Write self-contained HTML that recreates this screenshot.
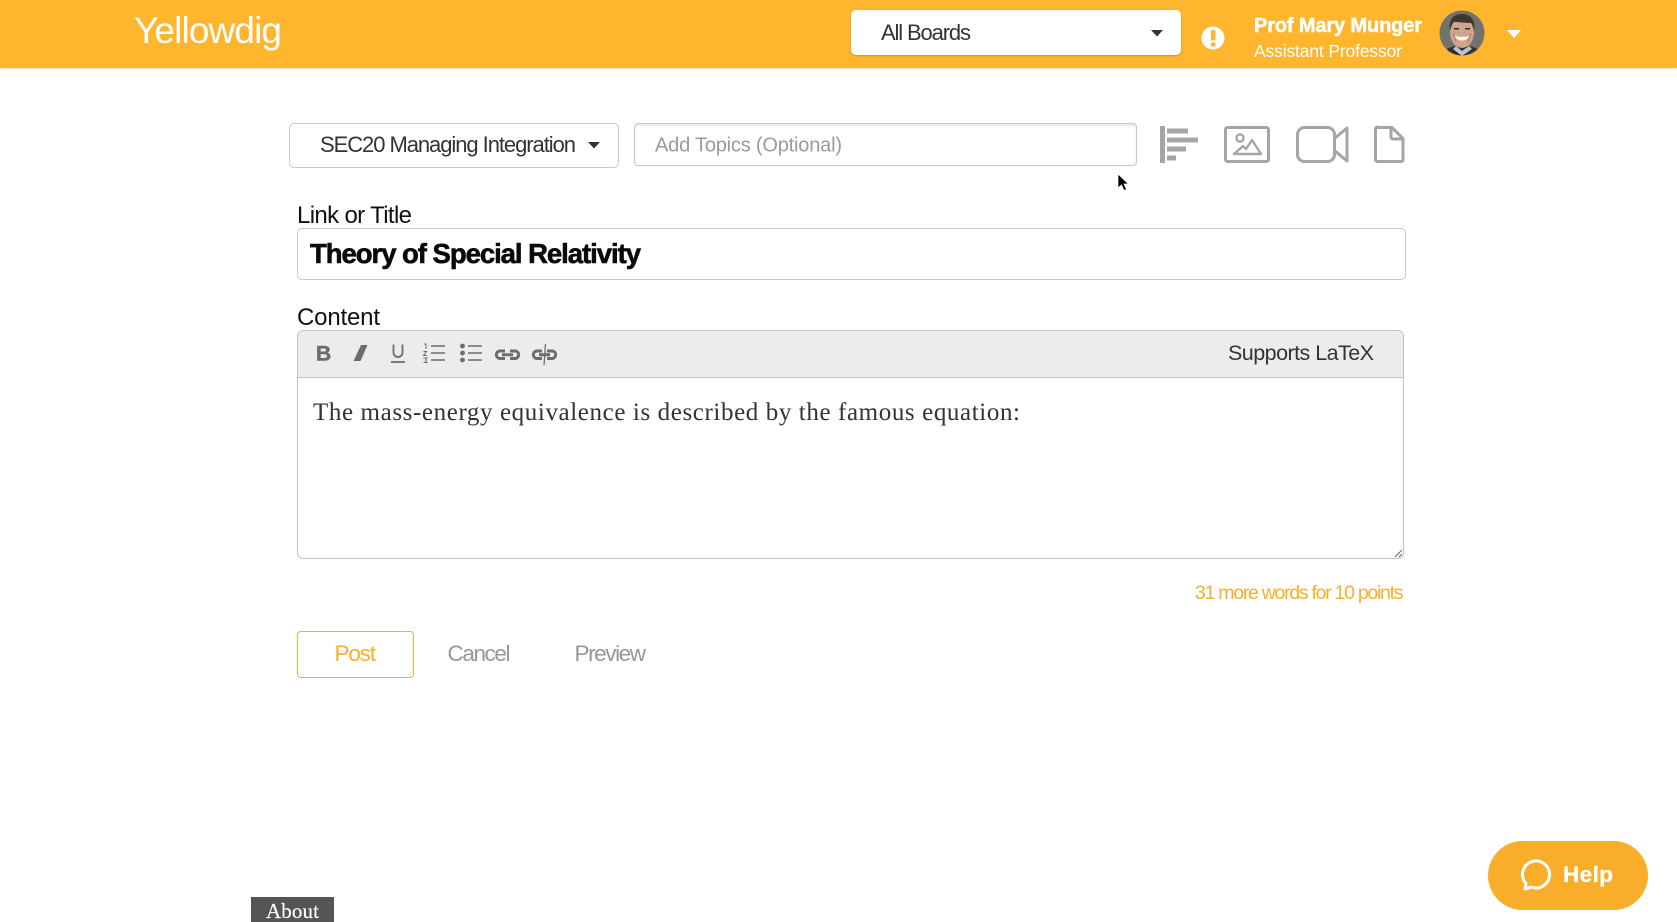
<!DOCTYPE html>
<html lang="en">
<head>
<meta charset="utf-8">
<title>Yellowdig</title>
<style>
html,body{margin:0;padding:0;background:#fff;width:1677px;height:922px;overflow:hidden}
.b{position:absolute;box-sizing:border-box}
svg.o{position:absolute;left:0;top:0}
text{font-family:"Liberation Sans",sans-serif}
.s{font-family:"Liberation Serif",serif}
</style>
</head>
<body>
<div class="b" style="left:0;top:0;width:1677px;height:68px;background:#ffb52e;box-shadow:0 1px 2px rgba(0,0,0,.15)"></div>
<div class="b" style="left:851px;top:10px;width:330px;height:45px;background:#fff;border-radius:5px;box-shadow:0 1px 2px rgba(0,0,0,.2)"></div>
<div class="b" style="left:289px;top:123px;width:330px;height:45px;border:1px solid #c8c8c8;border-radius:5px"></div>
<div class="b" style="left:634px;top:123px;width:503px;height:43px;border:1px solid #c8c8c8;border-radius:4px;box-shadow:inset 0 2px 2px rgba(0,0,0,.09)"></div>
<div class="b" style="left:297px;top:228px;width:1109px;height:52px;border:1px solid #c8c8c8;border-radius:5px"></div>
<div class="b" style="left:297px;top:330px;width:1107px;height:229px;border:1px solid #c4c4c4;border-radius:6px;overflow:hidden">
  <div style="height:46px;background:#ececec;border-bottom:1px solid #c4c4c4"></div>
</div>
<div class="b" style="left:297px;top:631px;width:117px;height:47px;border:1px solid #f9ae2b;border-radius:4px"></div>
<div class="b" style="left:251px;top:897px;width:83px;height:25px;background:#555"></div>
<div class="b" style="left:1488px;top:841px;width:160px;height:69px;background:#f9ae2b;border-radius:35px"></div>

<svg class="o" width="1677" height="922" viewBox="0 0 1677 922" xmlns="http://www.w3.org/2000/svg">
  <text x="134" y="43" font-size="37" fill="#fff" textLength="148" lengthAdjust="spacing">Yellowdig</text>
  <text x="881" y="40" font-size="22" fill="#333" textLength="90" lengthAdjust="spacing">All Boards</text>
  <path d="M1151 30h12l-6 6.500z" fill="#333"/>
  <circle cx="1213" cy="38" r="11.500" fill="#fff"/>
  <rect x="1211" y="30" width="4.500" height="10.500" rx="1" fill="#ffb52e"/>
  <rect x="1211" y="42.500" width="4.500" height="4" rx="1" fill="#ffb52e"/>
  <text x="1254" y="32" font-size="20" font-weight="700" fill="#fff" stroke="#fff" stroke-width=".5" textLength="168" lengthAdjust="spacing">Prof Mary Munger</text>
  <text x="1254" y="57" font-size="17.500" fill="#fff" textLength="148" lengthAdjust="spacing">Assistant Professor</text>

  <defs><clipPath id="av"><circle cx="1462" cy="33" r="22.500"/></clipPath></defs>
  <g clip-path="url(#av)">
    <rect x="1439" y="10" width="46" height="46" fill="#72726e"/>
    <path d="M1441 56c2-6 9-9 14-10h14c6 1 12 4 14 10z" fill="#2f3238"/>
    <path d="M1456 46l6 5 7-5 3 3-10 7-9-7z" fill="#b9c6cf"/>
    <ellipse cx="1462" cy="32" rx="12" ry="16" fill="#cfa68c"/>
    <path d="M1450 31c-2-12 4-17 12-17s14 5 12 17c-1-4-2-7-3-8-6 0-12-1-17-1-2 2-3 5-4 9z" fill="#43362e"/>
    <path d="M1454.500 36c3 6 12 6 15 0-4 1-11 1-15 0z" fill="#fbf8f4"/>
    <rect x="1454" y="28" width="5" height="1.500" fill="#3d2a22"/>
    <rect x="1465" y="28" width="5" height="1.500" fill="#3d2a22"/>
    <path d="M1453 33c1 4 3 7 3 9M1471 33c-1 4-3 7-3 9" stroke="#a87f68" fill="none"/>
  </g>
  <path d="M1507 30h14l-7 8z" fill="#fff"/>

  <text x="320" y="152" font-size="22" fill="#333" textLength="256" lengthAdjust="spacing">SEC20 Managing Integration</text>
  <path d="M588 142h12l-6 6.500z" fill="#333"/>
  <text x="655" y="151.500" font-size="20" fill="#9a9a9a" textLength="187" lengthAdjust="spacing">Add Topics (Optional)</text>

  <g fill="#a5a5a5">
    <rect x="1160" y="126" width="5" height="37"/>
    <rect x="1167" y="128.500" width="21" height="5"/>
    <rect x="1167" y="137.500" width="31" height="5"/>
    <rect x="1167" y="146.500" width="19" height="5"/>
    <rect x="1167" y="155.500" width="9" height="5"/>
  </g>
  <g fill="none" stroke="#a5a5a5" stroke-width="3" stroke-linejoin="round">
    <rect x="1225.500" y="127.500" width="43" height="34" rx="2"/>
    <circle cx="1240" cy="138" r="3.600" stroke-width="2.400"/>
    <path d="M1234 154l9-8 3 3 6-9 9 14z" stroke-width="2.400"/>
    <rect x="1297.500" y="127.500" width="37" height="34" rx="7"/>
    <path d="M1335 138l12-10v33l-12-10"/>
    <path d="M1377.500 127.500h14.500l11 11v21a2 2 0 0 1-2 2h-23.500a2 2 0 0 1-2-2v-30.500a2 2 0 0 1 2-2z"/>
    <path d="M1391 127.500v9.500a2 2 0 0 0 2 2h10"/>
  </g>

  <path d="M1118 174v14l3.500-3 2.500 5.500 2.500-1-2.500-5.500h4.500z" fill="#000" stroke="#fff" stroke-width=".7"/>

  <text x="297" y="223" font-size="24" fill="#111" textLength="115" lengthAdjust="spacing">Link or Title</text>
  <text x="310" y="263" font-size="27.500" font-weight="700" fill="#0a0a0a" stroke="#0a0a0a" stroke-width=".6" textLength="331" lengthAdjust="spacing">Theory of Special Relativity</text>
  <text x="297" y="325" font-size="24" fill="#111" textLength="83" lengthAdjust="spacing">Content</text>

  <text x="316" y="360.500" font-size="21" font-weight="700" fill="#6c6c6c" stroke="#6c6c6c" stroke-width=".5" textLength="15" lengthAdjust="spacing">B</text>
  <path d="M361 345h6.500l-7 16h-7z" fill="#6c6c6c"/>
  <path d="M393.500 344.500v8a4.500 4.500 0 0 0 9 0v-8M391 362h14" fill="none" stroke="#6c6c6c" stroke-width="1.800"/>
  <g fill="none" stroke="#6c6c6c" stroke-width="1.500">
    <path d="M431 346h14M431 353h14M431 360h14"/>
    <path d="M468 346h14M468 353h14M468 360h14"/>
    <path d="M424 344h2v5M423.500 351.500h3l-3 4h3.500M423.500 358h3.500l-1.500 2 1.500 2.500h-3.500" stroke-width="1"/>
  </g>
  <g fill="#6c6c6c"><circle cx="462.500" cy="346" r="2.400"/><circle cx="462.500" cy="353" r="2.400"/><circle cx="462.500" cy="360" r="2.400"/></g>
  <g fill="none" stroke="#6c6c6c" stroke-width="3">
    <path d="M505 351h-5.500a3.800 3.800 0 0 0 0 7.500h5.500M510 351h5.500a3.800 3.800 0 0 1 0 7.500h-5.500M502 354.700h11"/>
    <path d="M542 351h-5.500a3.800 3.800 0 0 0 0 7.500h5.500M547 351h5.500a3.800 3.800 0 0 1 0 7.500h-5.500M539 354.700h11"/>
    <path d="M545.500 344l-1.500 21" stroke-width="1.300"/>
  </g>
  <text x="1228" y="360" font-size="21.500" fill="#333" textLength="146" lengthAdjust="spacing">Supports LaTeX</text>

  <text class="s" x="313" y="420" font-size="25" fill="#333" textLength="707" lengthAdjust="spacing">The mass-energy equivalence is described by the famous equation:</text>
  <path d="M1395 557l7-7M1399 557l3-3" stroke="#666" stroke-width="1" fill="none"/>

  <text x="1195" y="599" font-size="19.500" fill="#f9ae2b" textLength="208.500" lengthAdjust="spacing">31 more words for 10 points</text>

  <text x="334.500" y="661" font-size="22.500" fill="#f9ae2b" textLength="41.500" lengthAdjust="spacing">Post</text>
  <text x="447.500" y="661" font-size="22.500" fill="#979797" textLength="63" lengthAdjust="spacing">Cancel</text>
  <text x="574.500" y="661" font-size="22.500" fill="#979797" textLength="71.500" lengthAdjust="spacing">Preview</text>

  <text class="s" x="266" y="918" font-size="21" fill="#fff" stroke="#fff" stroke-width=".2" textLength="53" lengthAdjust="spacing">About</text>

  <path d="M1525 889c.5-2 1-4 1-5.500a13.500 13.500 0 1 1 5 3.500c-2 1-4 1.700-6 2z" fill="none" stroke="#fff" stroke-width="3" stroke-linejoin="round"/>
  <text x="1563" y="882" font-size="22.500" font-weight="700" fill="#fff" stroke="#fff" stroke-width=".3" textLength="50" lengthAdjust="spacing">Help</text>
</svg>
</body>
</html>
